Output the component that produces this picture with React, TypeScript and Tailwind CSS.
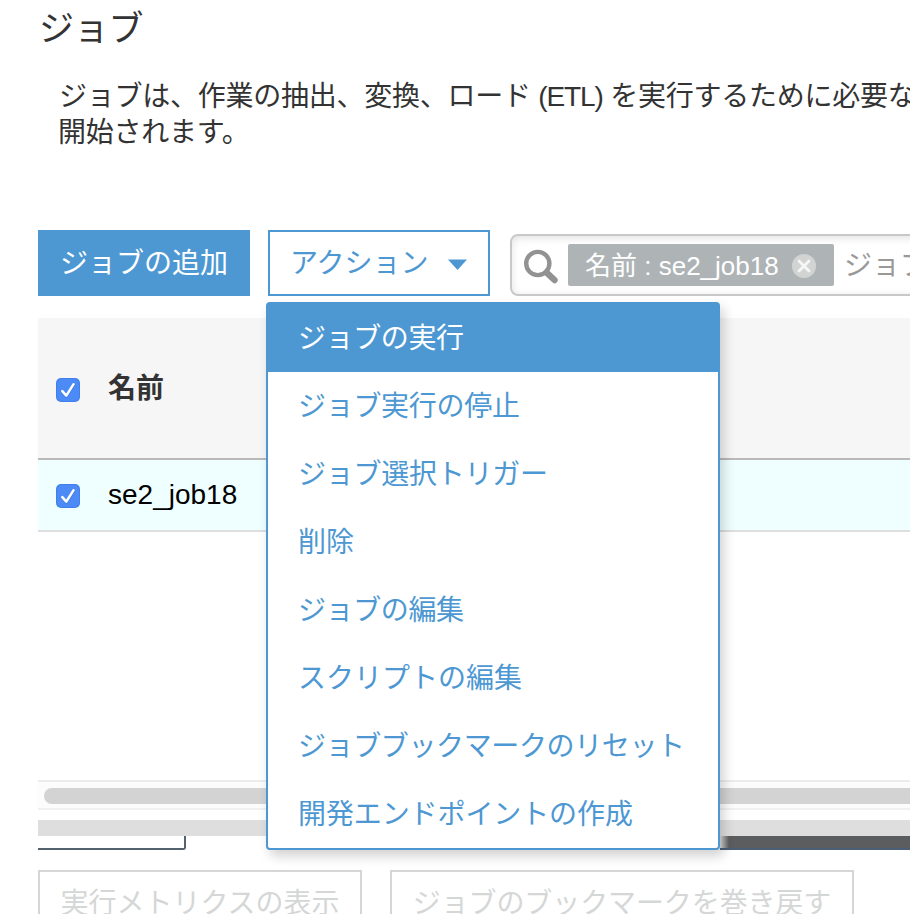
import React, { useState } from 'react';

interface MenuItem {
  id: string;
  label: string;
  tracking: string;
}

const menuItems: MenuItem[] = [
  { id: 'run', label: 'ジョブの実行', tracking: 'tracking-[-0.4px]' },
  { id: 'stop', label: 'ジョブ実行の停止', tracking: 'tracking-[-0.3px]' },
  { id: 'trigger', label: 'ジョブ選択トリガー', tracking: 'tracking-[-0.25px]' },
  { id: 'delete', label: '削除', tracking: 'tracking-normal' },
  { id: 'edit', label: 'ジョブの編集', tracking: 'tracking-[-0.4px]' },
  { id: 'script', label: 'スクリプトの編集', tracking: 'tracking-normal' },
  { id: 'reset', label: 'ジョブブックマークのリセット', tracking: 'tracking-[-0.38px]' },
  { id: 'endpoint', label: '開発エンドポイントの作成', tracking: 'tracking-[-0.1px]' },
];

const Checkbox: React.FC = () => (
  <svg className="size-6 shrink-0" viewBox="0 0 24 24" fill="none">
    <rect width="24" height="24" rx="5" fill="#3f7fee" />
    <rect x="1" y="1" width="22" height="22" rx="4.5" fill="#4c8bf5" />
    <path d="M6.5 14L10.3 18.8L18 7.2" stroke="#3670d8" strokeWidth="2.4" strokeLinecap="round" strokeLinejoin="round" opacity="0.6" />
    <path d="M6.3 13.1L10.3 17.6L17.6 6.2" stroke="#fff" strokeWidth="2.5" strokeLinecap="round" strokeLinejoin="round" />
  </svg>
);

const ActionMenu: React.FC<{ activeId: string; onHover: (id: string) => void }> = ({ activeId, onHover }) => (
  <ul className="absolute top-[72px] left-[-2px] z-10 w-[454px] rounded-[4px] border-2 border-[#4d98d2] bg-white shadow-[4px_6px_12px_rgba(0,0,0,0.18)]">
    {menuItems.map((item) => (
      <li
        key={item.id}
        onMouseEnter={() => onHover(item.id)}
        className={`flex h-[68px] items-center pt-[2px] pl-[30px] ${item.tracking} ${
          item.id === activeId ? 'bg-[#4d98d2] text-white' : 'text-[#4d98d2]'
        }`}
      >
        {item.label}
      </li>
    ))}
  </ul>
);

const SearchBox: React.FC = () => (
  <div className="mt-1 ml-5 flex h-[62px] w-[500px] shrink-0 items-center rounded-[8px] border-2 border-[#c8c8c8] pl-[11px] shadow-[inset_0_2px_8px_rgba(0,0,0,0.12)]">
    <svg className="h-[38px] w-9 shrink-0" viewBox="0 0 36 38" fill="none" stroke="#929292">
      <circle cx="14.8" cy="17.5" r="11.6" strokeWidth="4.4" />
      <path d="M23.5 26.5L31.5 34" strokeWidth="6.5" strokeLinecap="round" />
    </svg>
    <div className="ml-[9px] flex h-[42px] w-[266px] shrink-0 items-center rounded-[2px] bg-[#aeb4b6] pl-[17px] text-[26px] text-white">
      <span className="w-[207px] pt-px whitespace-pre">名前 : se2_job18</span>
      <svg className="mt-[2px] size-6" viewBox="0 0 24 24" fill="none">
        <circle cx="12" cy="12" r="12" fill="#d2d4d4" />
        <path d="M7 7L17 17M17 7L7 17" stroke="#f6f6f6" strokeWidth="2.8" strokeLinecap="round" />
      </svg>
    </div>
    <span className="ml-[10px] pt-[2px] text-[#999]">ジョブ</span>
  </div>
);

export default function App() {
  const [activeId, setActiveId] = useState('run');

  return (
    <div className="h-[914px] w-[910px] overflow-hidden bg-white pl-[38px] font-['Liberation_Sans','Noto_Sans_CJK_JP',sans-serif] text-[28px] leading-9 whitespace-nowrap text-[#333]">
      <h1 className="h-[78px] pt-2 pl-px text-[35px] leading-[42px] tracking-[-0.3px]">ジョブ</h1>
      <p className="h-[152px] pt-px pl-[21px] tracking-[-0.25px]">
        ジョブは、作業の抽出、変換、ロード <span className="tracking-[-1.1px]">(ETL)</span> を実行するために必要な
        <br />
        <span className="-ml-px">開始されます。</span>
      </p>

      <div className="flex h-[88px] items-start">
        <button className="h-[66px] w-[212px] shrink-0 bg-[#4d98d2] pt-[2px] text-white">ジョブの追加</button>
        <div className="relative ml-[18px] shrink-0">
          <button className="flex h-[66px] w-[222px] items-center border-2 border-[#4d98d2] pt-[2px] pl-5 text-[#4d98d2]">
            アクション
            <svg className="mt-px ml-[19px] h-[11px] w-[19px]" viewBox="0 0 19 11">
              <path d="M0 0.5H19L9.5 11Z" fill="#4d98d2" />
            </svg>
          </button>
          <ActionMenu activeId={activeId} onHover={setActiveId} />
        </div>
        <SearchBox />
      </div>

      {/* ジョブ一覧 */}
      <div className="flex h-[142px] items-center border-b-2 border-[#b9b9b9] bg-[#f6f6f6] pt-1 pl-[18px]">
        <Checkbox />
        <span className="-mt-[2px] ml-7 font-bold">名前</span>
      </div>
      <div className="flex h-[72px] items-center border-b-2 border-[#dedede] bg-[#efffff] pt-[2px] pl-[18px] text-black">
        <Checkbox />
        <span className="-mt-[2px] ml-7">se2_job18</span>
      </div>

      {/* 横スクロールバー */}
      <div className="mt-[248px] flex h-[30px] items-center border-t-2 border-b-2 border-t-[#ececec] border-b-[#f1f1f1] bg-[#fcfcfc] pt-[2px] pl-[6px]">
        <div className="h-4 flex-1 rounded-l-full bg-[#d3d3d3]" />
      </div>
      <div className="mt-[10px] h-4 bg-[#dedede]" />
      <div className="flex h-[14px] justify-between">
        <div className="w-[148px] rounded-br-[3px] border-r-2 border-b-2 border-[#52626f]" />
        <div className="w-[190px] border-b-2 border-[#4a5f76] bg-linear-to-r from-[#e0e0e0] to-[#5c5d5e] to-[9px]" />
      </div>

      <div className="mt-5 flex gap-7 text-[#d5d7d7]">
        <button className="h-[66px] w-[324px] border-2 border-[#d5d7d7] pt-[2px]">実行メトリクスの表示</button>
        <button className="h-[66px] w-[464px] border-2 border-[#d5d7d7] pt-[2px] tracking-[-0.1px]">
          ジョブのブックマークを巻き戻す
        </button>
      </div>
    </div>
  );
}
